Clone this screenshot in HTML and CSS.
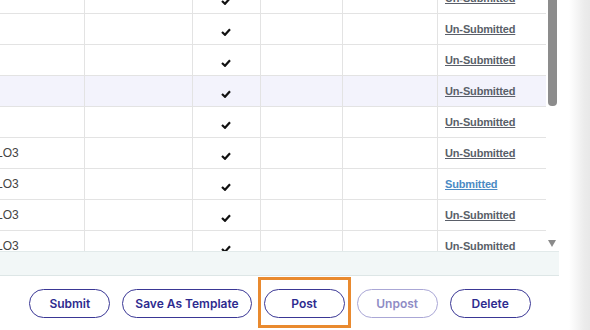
FILE: index.html
```html
<!DOCTYPE html>
<html lang="en">
<head>
  <meta charset="UTF-8">
  <title>Outcomes</title>
  <link rel="stylesheet" href="styles.css">
</head>
<body>
  <div class="page">
    <div class="main">
      <div class="grid-area">
        <div class="table-clip">
          <div class="table">
            <div class="row">
              <div class="cell"></div><div class="cell"></div>
              <div class="cell check"><svg width="10" height="8" viewBox="0 0 10 8"><path d="M1 4 L4 6.8 L9 1.2" fill="none" stroke="#111" stroke-width="2.2"/></svg></div>
              <div class="cell"></div><div class="cell"></div>
              <div class="cell status"><a href="#">Un-Submitted</a></div>
            </div>
            <div class="row">
              <div class="cell"></div><div class="cell"></div>
              <div class="cell check"><svg width="10" height="8" viewBox="0 0 10 8"><path d="M1 4 L4 6.8 L9 1.2" fill="none" stroke="#111" stroke-width="2.2"/></svg></div>
              <div class="cell"></div><div class="cell"></div>
              <div class="cell status"><a href="#">Un-Submitted</a></div>
            </div>
            <div class="row">
              <div class="cell"></div><div class="cell"></div>
              <div class="cell check"><svg width="10" height="8" viewBox="0 0 10 8"><path d="M1 4 L4 6.8 L9 1.2" fill="none" stroke="#111" stroke-width="2.2"/></svg></div>
              <div class="cell"></div><div class="cell"></div>
              <div class="cell status"><a href="#">Un-Submitted</a></div>
            </div>
            <div class="row hover">
              <div class="cell"></div><div class="cell"></div>
              <div class="cell check"><svg width="10" height="8" viewBox="0 0 10 8"><path d="M1 4 L4 6.8 L9 1.2" fill="none" stroke="#111" stroke-width="2.2"/></svg></div>
              <div class="cell"></div><div class="cell"></div>
              <div class="cell status"><a href="#">Un-Submitted</a></div>
            </div>
            <div class="row">
              <div class="cell"></div><div class="cell"></div>
              <div class="cell check"><svg width="10" height="8" viewBox="0 0 10 8"><path d="M1 4 L4 6.8 L9 1.2" fill="none" stroke="#111" stroke-width="2.2"/></svg></div>
              <div class="cell"></div><div class="cell"></div>
              <div class="cell status"><a href="#">Un-Submitted</a></div>
            </div>
            <div class="row">
              <div class="cell code">LO3</div><div class="cell"></div>
              <div class="cell check"><svg width="10" height="8" viewBox="0 0 10 8"><path d="M1 4 L4 6.8 L9 1.2" fill="none" stroke="#111" stroke-width="2.2"/></svg></div>
              <div class="cell"></div><div class="cell"></div>
              <div class="cell status"><a href="#">Un-Submitted</a></div>
            </div>
            <div class="row">
              <div class="cell code">LO3</div><div class="cell"></div>
              <div class="cell check"><svg width="10" height="8" viewBox="0 0 10 8"><path d="M1 4 L4 6.8 L9 1.2" fill="none" stroke="#111" stroke-width="2.2"/></svg></div>
              <div class="cell"></div><div class="cell"></div>
              <div class="cell status"><a href="#" class="done">Submitted</a></div>
            </div>
            <div class="row">
              <div class="cell code">LO3</div><div class="cell"></div>
              <div class="cell check"><svg width="10" height="8" viewBox="0 0 10 8"><path d="M1 4 L4 6.8 L9 1.2" fill="none" stroke="#111" stroke-width="2.2"/></svg></div>
              <div class="cell"></div><div class="cell"></div>
              <div class="cell status"><a href="#">Un-Submitted</a></div>
            </div>
            <div class="row">
              <div class="cell code">LO3</div><div class="cell"></div>
              <div class="cell check"><svg width="10" height="8" viewBox="0 0 10 8"><path d="M1 4 L4 6.8 L9 1.2" fill="none" stroke="#111" stroke-width="2.2"/></svg></div>
              <div class="cell"></div><div class="cell"></div>
              <div class="cell status"><a href="#">Un-Submitted</a></div>
            </div>
          </div>
        </div>
        <div class="scrollbar">
          <div class="thumb"></div>
          <div class="arrow"></div>
        </div>
      </div>
      <div class="table-footer"></div>
      <div class="actions">
        <button class="btn">Submit</button>
        <button class="btn">Save As Template</button>
        <span class="highlight"><button class="btn">Post</button></span>
        <button class="btn" disabled>Unpost</button>
        <button class="btn">Delete</button>
      </div>
    </div>
    <div class="side"></div>
  </div>
</body>
</html>
```

FILE: styles.css
```css
html, body {
  margin: 0;
  padding: 0;
  background: #fff;
}
body {
  font-family: "Liberation Sans", Arial, sans-serif;
  width: 590px;
  height: 330px;
  overflow: hidden;
}
.page {
  display: flex;
  height: 330px;
}
.main {
  width: 560px;
  display: flex;
  flex-direction: column;
}
.side {
  flex: 1;
  background: linear-gradient(to right, #fff 0, #fff 9px, #ececec 24px, #e8e8e8 30px);
}
.grid-area {
  display: flex;
  height: 251px;
}
.table-clip {
  width: 546px;
  overflow: hidden;
}
.table {
  margin-top: -17px;
}
.row {
  display: grid;
  grid-template-columns: 85px 108px 68px 82px 95px 1fr;
  height: 30px;
  border-bottom: 1px solid #e3e3e3;
}
.row.hover {
  background: #f3f3fc;
}
.cell {
  border-right: 1px solid #e3e3e3;
  display: flex;
  align-items: center;
  overflow: hidden;
}
.cell:last-child {
  border-right: none;
}
.code {
  font-size: 12px;
  color: #444;
  text-indent: -4px;
  padding-bottom: 1px;
}
.check {
  justify-content: center;
  padding-top: 5px;
}
.check svg {
  margin-right: 1px;
}
.status {
  padding-left: 7px;
}
.status a {
  font-size: 11px;
  font-weight: bold;
  color: #5a5f69;
  text-decoration: underline;
  letter-spacing: -0.15px;
}
.status a.done {
  color: #4b8ac4;
}
.scrollbar {
  width: 14px;
  display: flex;
  flex-direction: column;
  justify-content: space-between;
  align-items: flex-start;
  padding-left: 2px;
  box-sizing: border-box;
}
.thumb {
  width: 9px;
  height: 106px;
  background: #8c8c8c;
  border-radius: 0 0 4px 4px;
}
.arrow {
  width: 0;
  height: 0;
  margin: 0 0 4px 0;
  border-left: 4.5px solid transparent;
  border-right: 4.5px solid transparent;
  border-top: 7px solid #8a8a8a;
}
.table-footer {
  height: 23px;
  background: #f2f7f7;
  border-top: 1px solid #e2eaea;
  border-bottom: 1px solid #dde6e6;
  margin-right: 1px;
}
.actions {
  display: flex;
  justify-content: center;
  gap: 12px;
  padding-top: 13px;
}
.btn {
  font-family: Inter, "Liberation Sans", sans-serif;
  font-size: 12px;
  font-weight: 600;
  color: #2e2b8f;
  background: #fff;
  border: 1.5px solid #3a3795;
  border-radius: 15px;
  height: 29px;
  min-width: 81px;
  padding: 0 12px;
  cursor: pointer;
}
.btn:disabled {
  color: #8f8cc5;
  border-color: #aaa7d6;
  cursor: default;
}
.highlight {
  position: relative;
  display: flex;
}
.highlight::after {
  content: "";
  position: absolute;
  top: -12px;
  bottom: -10px;
  left: -6px;
  right: -6px;
  border: 3px solid #e98a2f;
  pointer-events: none;
}
```
